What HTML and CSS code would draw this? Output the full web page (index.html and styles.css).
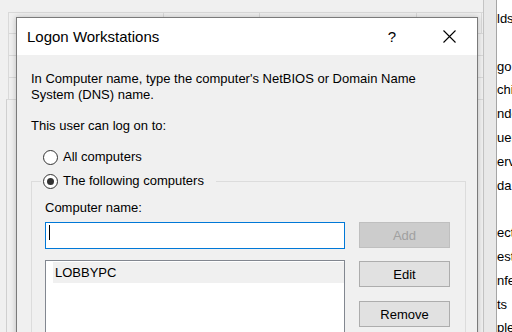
FILE: index.html
```html
<!DOCTYPE html>
<html>
<head>
<meta charset="utf-8">
<link rel="stylesheet" href="styles.css">
</head>
<body>
<div class="desktop">
  <div class="props">
    <div class="tabrow">
      <div class="tab t1">Published Certificates</div>
      <div class="tab t2">Member Of</div>
      <div class="tab t3">Password Replication</div>
      <div class="tab t4">Object</div>
    </div>
    <div class="tabrow blank"></div>
    <div class="tabrow blank"></div>
    <div class="tabrow blank"></div>
    <div class="page"></div>
  </div>
  <div class="gutter"></div>
  <div class="main">
    <div class="ln">lds</div>
    <div class="ln"></div>
    <div class="ln">go</div>
    <div class="ln">chi</div>
    <div class="ln">nde</div>
    <div class="ln">uer</div>
    <div class="ln">erv</div>
    <div class="ln">da</div>
    <div class="ln"></div>
    <div class="ln">ect</div>
    <div class="ln">est</div>
    <div class="ln">nfe</div>
    <div class="ln">ts</div>
    <div class="ln">ple</div>
  </div>

  <div class="dialog">
    <div class="titlebar">
      <div class="title">Logon Workstations</div>
      <div class="help">?</div>
      <div class="close">
        <svg width="13" height="13" viewBox="0 0 13 13"><path d="M0.5 0.5 L12.5 12.5 M12.5 0.5 L0.5 12.5" stroke="#000" stroke-width="1.1" fill="none"/></svg>
      </div>
    </div>
    <div class="body">
      <p class="intro">In Computer name, type the computer's NetBIOS or Domain Name<br>System (DNS) name.</p>
      <p class="lead">This user can log on to:</p>
      <label class="radio first"><span class="dot"></span>All computers</label>
      <fieldset class="group">
        <legend class="legend"><label class="radio"><span class="dot on"></span>The following computers</label></legend>
        <div class="caption">Computer name:</div>
        <div class="grid">
          <div class="textbox"><span class="caret"></span></div>
          <button class="btn disabled">Add</button>
          <div class="listbox">
            <div class="item">LOBBYPC</div>
          </div>
          <div class="btncol">
            <button class="btn">Edit</button>
            <button class="btn">Remove</button>
          </div>
        </div>
      </fieldset>
    </div>
  </div>
</div>
</body>
</html>
```
FILE: styles.css
```css
* { box-sizing: border-box; }
html, body { margin: 0; padding: 0; }
body {
  font-family: "Liberation Sans", Arial, sans-serif;
  font-size: 13px;
  color: #000;
  background: #f0f0f0;
}
.desktop {
  position: relative;
  width: 512px;
  height: 332px;
  overflow: hidden;
  display: flex;
  background: #f0f0f0;
}
.props {
  width: 484px;
  flex: none;
  padding-top: 12px;
  border-right: 1px solid #c4c4c4;
  background: #f0f0f0;
}
.tabrow {
  display: flex;
  height: 21px;
  margin-left: 8px;
  border-top: 1px solid #d9d9d9;
}
.tabrow.blank {
  height: 22px;
  border-left: 1px solid #d9d9d9;
}
.tab {
  border-left: 1px solid #d9d9d9;
  padding-left: 16px;
  line-height: 17px;
  white-space: nowrap;
  overflow: hidden;
}
.t1 { width: 155px; }
.t2 { width: 96px; }
.t3 { width: 157px; }
.t4 { width: 66px; border-right: 1px solid #d9d9d9; }
.page {
  margin-left: 6px;
  height: 240px;
  border-top: 1px solid #d9d9d9;
  border-left: 1px solid #d0d0d0;
}
.gutter {
  width: 12px;
  flex: none;
  background: #e8e8e8;
}
.main {
  flex: 1;
  background: #fff;
  border-left: 1px solid #a5a5a5;
  padding-top: 7px;
  overflow: hidden;
}
.ln {
  height: 23.8px;
  line-height: 23.8px;
  white-space: nowrap;
}

.dialog {
  position: absolute;
  left: 16px;
  top: 17px;
  width: 462px;
  height: 330px;
  border: 1px solid #7a7a7a;
  background: #f0f0f0;
  box-shadow: 0 0 6px rgba(0, 0, 0, 0.22);
  overflow: hidden;
}
.titlebar {
  height: 37px;
  background: #fff;
  display: flex;
  align-items: center;
  padding-left: 10px;
}
.title {
  flex: 1;
  font-size: 15px;
}
.help {
  width: 46px;
  margin-right: 11px;
  text-align: center;
  font-size: 15px;
}
.close {
  width: 46px;
  margin-right: 5px;
  display: flex;
  justify-content: center;
  align-items: center;
}
.close svg { display: block; }
.body {
  padding: 16px 11px 0 14px;
}
.intro, .lead {
  margin: 0;
  line-height: 16px;
}
.lead { margin-top: 15px; }
.radio {
  display: flex;
  align-items: center;
  height: 16px;
  line-height: 16px;
  white-space: nowrap;
}
.radio.first {
  margin-top: 15px;
  padding-left: 12px;
}
.dot {
  width: 15px;
  height: 15px;
  border: 1px solid #333;
  border-radius: 50%;
  background: #fff;
  margin-right: 5px;
  display: flex;
  align-items: center;
  justify-content: center;
}
.dot.on::after {
  content: "";
  width: 7px;
  height: 7px;
  border-radius: 50%;
  background: #333;
}
.group {
  margin: 8px 0 0 0;
  padding: 0 11px 0 13px;
  border: 1px solid #dcdcdc;
  min-width: 0;
  height: 200px;
}
.legend {
  margin-left: -4px;
  padding: 0 12px 0 2px;
}
.caption {
  margin-top: 11px;
  line-height: 16px;
}
.grid {
  margin-top: 6px;
  display: grid;
  grid-template-columns: 300px 91px;
  column-gap: 14px;
  row-gap: 11px;
  align-items: start;
}
.textbox {
  height: 27px;
  background: #fff;
  border: 1px solid #0078d7;
  padding: 2px 0 0 3px;
}
.caret {
  display: block;
  width: 1px;
  height: 15px;
  background: #000;
}
.btn {
  height: 26px;
  width: 91px;
  font-family: "Liberation Sans", Arial, sans-serif;
  font-size: 13px;
  color: #000;
  background: #e1e1e1;
  border: 1px solid #adadad;
  border-radius: 0;
  padding: 0;
  margin: 0;
}
.btn.disabled {
  background: #cccccc;
  border-color: #bfbfbf;
  color: #a0a0a0;
}
.listbox {
  height: 100px;
  background: #fff;
  border: 1px solid #828790;
  padding: 1px 0 0 7px;
}
.item {
  height: 21px;
  line-height: 21px;
  background: #f0f0f0;
  padding-left: 2px;
}
.btncol {
  margin-top: 1px;
  display: flex;
  flex-direction: column;
  gap: 14px;
}
```
